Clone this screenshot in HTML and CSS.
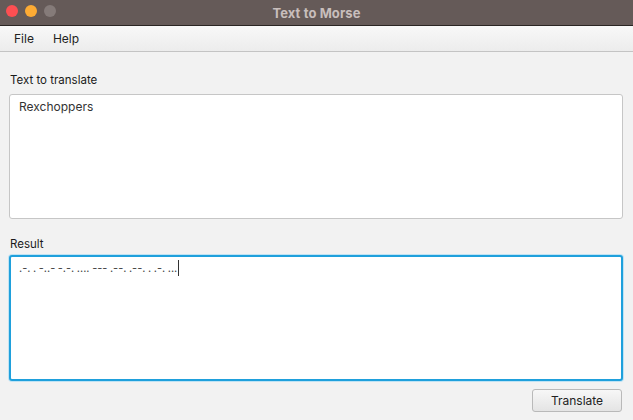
FILE: index.html
```html
<!DOCTYPE html>
<html>
<head>
<meta charset="utf-8">
<link rel="stylesheet" href="styles.css">
</head>
<body>
<div class="window">
  <div class="titlebar">
    <div class="lights">
      <span class="light red"></span>
      <span class="light yellow"></span>
      <span class="light gray"></span>
    </div>
    <div class="title">Text to Morse</div>
  </div>
  <div class="menubar">
    <span class="menu">File</span>
    <span class="menu">Help</span>
  </div>
  <div class="content">
    <label class="label">Text to translate</label>
    <div class="area">Rexchoppers</div>
    <label class="label result-label">Result</label>
    <div class="area focused"><span class="morse">.-. . -..- -.-. .... --- .--. .--. . .-. ...</span><span class="caret"></span></div>
    <div class="actions">
      <button class="btn">Translate</button>
    </div>
  </div>
</div>
</body>
</html>
```
FILE: styles.css
```css
html, body {
  margin: 0;
  padding: 0;
  background: #f2f2f2;
  width: 633px;
  height: 420px;
  overflow: hidden;
  font-family: "Inter", "Liberation Sans", sans-serif;
}
.window {
  display: flex;
  flex-direction: column;
  height: 420px;
}
.titlebar {
  height: 25px;
  background: #655a58;
  border-bottom: 1px solid #2a2523;
  display: flex;
  align-items: center;
  justify-content: center;
  position: relative;
}
.lights {
  position: absolute;
  left: 6px;
  top: 5px;
  display: flex;
  gap: 7px;
}
.light {
  width: 12px;
  height: 12px;
  border-radius: 50%;
  display: block;
}
.red { background: #fc4f52; }
.yellow { background: #fdab34; }
.gray { background: #857b79; }
.title {
  color: #c8bebc;
  font-weight: 700;
  font-size: 13px;
  letter-spacing: 0.1px;
}
.menubar {
  height: 25px;
  background: linear-gradient(#f8f8f8, #ececec);
  border-bottom: 1px solid #c4c4c4;
  display: flex;
  align-items: center;
  padding-left: 14px;
  gap: 19px;
  font-size: 12px;
  color: #222;
}
.content {
  display: flex;
  flex-direction: column;
  padding: 21px 10px 0 9px;
}
.label {
  font-size: 11.5px;
  color: #1a1a1a;
  padding-left: 1px;
  height: 15px;
  line-height: 15px;
  margin-bottom: 6px;
}
.result-label {
  margin-top: 18px;
  margin-bottom: 3px;
}
.area {
  height: 125px;
  background: #fff;
  border: 1px solid #c6c6c6;
  border-radius: 3px;
  padding: 5px 9px;
  box-sizing: border-box;
  font-size: 12px;
  color: #333;
  line-height: 14px;
}
.area.focused {
  height: 126px;
  border: 2px solid #1fa0dc;
  box-shadow: 0 0 0 1px #bfe3f4;
  padding: 4px 8px;
  display: flex;
  align-items: flex-start;
}
.morse {
  font-size: 11px;
  letter-spacing: 0;
  word-spacing: -0.5px;
  color: #444;
}
.caret {
  display: inline-block;
  width: 1px;
  height: 16px;
  background: #333;
  margin-left: 1px;
  margin-top: -1px;
}
.actions {
  display: flex;
  justify-content: flex-end;
  padding-top: 8px;
  padding-right: 1px;
}
.btn {
  width: 90px;
  height: 23px;
  font-family: inherit;
  font-size: 12px;
  color: #222;
  background: linear-gradient(#f7f7f7, #e4e4e4);
  border: 1px solid #b9b9b9;
  border-radius: 3px;
  padding: 0;
}
```
